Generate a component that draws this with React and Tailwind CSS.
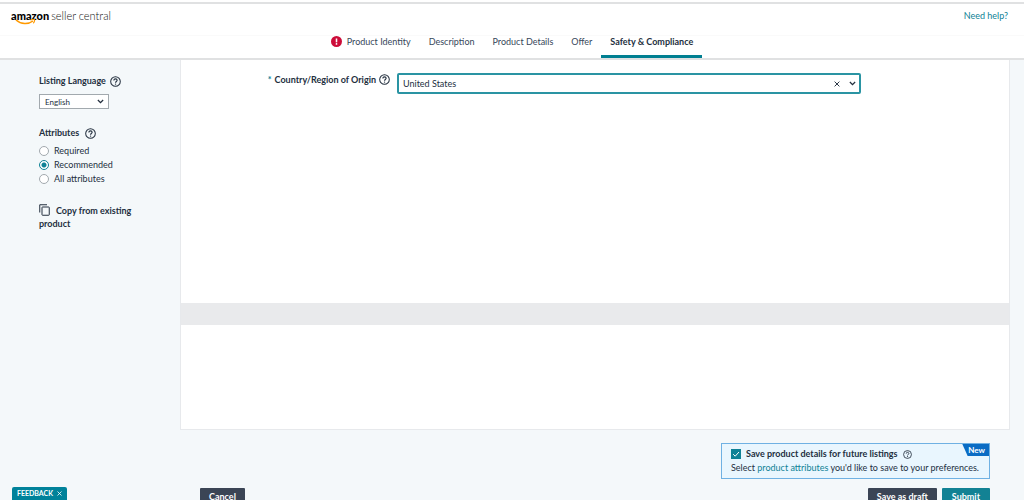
import { useState } from "react";

function HelpIcon({ className }) {
  return (
    <svg viewBox="0 0 24 24" fill="none" stroke="currentColor" className={className} aria-hidden="true">
      <circle cx="12" cy="12" r="10.5" strokeWidth="2.2" />
      <path d="M8.5 9.6C8.5 7.4 10 6.2 12 6.2s3.6 1.3 3.6 3.2c0 2.5-3.5 2.7-3.5 5.1" strokeWidth="2.4" />
      <circle cx="12.1" cy="17.6" r="1.5" fill="currentColor" stroke="none" />
    </svg>
  );
}

function Chevron({ className }) {
  return (
    <svg viewBox="0 0 12 8" fill="none" stroke="currentColor" strokeWidth="2.2" className={className} aria-hidden="true">
      <path d="M1.5 1.5 6 6l4.500-4.500" />
    </svg>
  );
}

function Cross({ className }) {
  return (
    <svg viewBox="0 0 10 10" fill="none" stroke="currentColor" strokeWidth="1.6" className={className} aria-hidden="true">
      <path d="m1 1 8 8M9 1 1 9" />
    </svg>
  );
}

function Logo() {
  return (
    <a href="#home" className="relative flex items-baseline gap-[2px] text-[11px] leading-4 text-[#111]">
      <span className="font-black text-black">amazon</span>
      <span className="font-light">seller central</span>
      <svg viewBox="0 0 40 12" fill="none" className="absolute top-[11px] left-1 h-[6px] w-[21px]" aria-hidden="true">
        <path d="M1 2c10 9 25 9 34 2" stroke="#f90" strokeWidth="3" />
        <path d="M30 2c3-1 6-1.500 8-.5.500 2-.500 5-2.500 7" stroke="#f90" strokeWidth="2.400" />
      </svg>
    </a>
  );
}

const tabs = ["Product Identity", "Description", "Product Details", "Offer", "Safety & Compliance"];

function Header() {
  return (
    <header className="border-t-2 border-b-2 border-[#e0e1e2] bg-white">
      <div className="flex h-8 items-center justify-between border-b border-[#fafafa] pr-4 pb-[7px] pl-[11px]">
        <Logo />
        <a href="#help" className="text-[9px] text-[#0f8296]">Need help?</a>
      </div>
      <nav className="flex h-[22px] justify-center text-[9px]">
        {tabs.map((tab, i) => (
          <a
            key={tab}
            href="#tab"
            className={
              i === tabs.length - 1
                ? "flex items-start border-b-3 border-[#007f91] px-[9px] font-bold text-[#232f3e] leading-3"
                : "flex items-start gap-[5px] px-[9px] text-[#37475a] leading-3"
            }
          >
            {i === 0 && (
              <svg viewBox="0 0 20 20" className="size-[11px]" aria-hidden="true">
                <circle cx="10" cy="10" r="10" fill="#cc0c39" />
                <path d="M10 4.500v7" stroke="#fff" strokeWidth="2.800" />
                <circle cx="10" cy="14.500" r="1.600" fill="#fff" />
              </svg>
            )}
            {tab}
          </a>
        ))}
      </nav>
    </header>
  );
}

function Sidebar() {
  const [attributes, setAttributes] = useState("Recommended");
  return (
    <aside className="w-[180px] shrink-0 pt-[15px] pr-12 pl-[39px] text-[9px]">
      <div className="flex items-center gap-1 leading-3 font-bold">
        <label htmlFor="language">Listing Language</label>
        <HelpIcon className="size-[11px]" />
      </div>
      <div className="relative mt-[7px] w-[70px]">
        <select
          id="language"
          defaultValue="English"
          className="h-[15px] w-full appearance-none border border-[#a2a9ae] bg-white pl-[5px] text-[8px] leading-3"
        >
          <option>English</option>
        </select>
        <Chevron className="pointer-events-none absolute top-[5px] right-[5px] h-[5px] w-[7px]" />
      </div>
      <fieldset className="mt-[18px]">
        <legend className="flex items-center gap-[6px] leading-3 font-bold">
          Attributes
          <HelpIcon className="size-[11px]" />
        </legend>
        <div className="mt-[5px] flex flex-col">
          {["Required", "Recommended", "All attributes"].map((name) => (
            <label key={name} className="flex h-[14px] items-center gap-[5px]">
              <input
                type="radio"
                name="attributes"
                checked={attributes === name}
                onChange={() => setAttributes(name)}
                className="size-[10px] appearance-none rounded-full border border-[#a2a9ae] bg-white checked:border-[#0f8296] checked:bg-[radial-gradient(circle,#0f8296_2px,white_3px)]"
              />
              {name}
            </label>
          ))}
        </div>
      </fieldset>
      <button type="button" className="mt-[18px] text-left leading-[13px] font-bold">
        <svg viewBox="0 0 22 24" fill="none" stroke="currentColor" strokeWidth="2" className="mr-[6px] inline h-3 w-[11px] align-[-2px]" aria-hidden="true">
          <path d="M1.500 17V1.500H16" />
          <rect x="6" y="6" width="14.500" height="16.500" rx="1" />
        </svg>
        Copy from existing product
      </button>
    </aside>
  );
}

function OriginField() {
  const [value, setValue] = useState("United States");
  return (
    <div className="flex pt-[13px] pr-[148px]">
      <div className="flex h-[13px] w-[216px] shrink-0 items-center justify-end gap-[3px] pr-[7px] text-[9px] font-bold">
        <span className="text-[#0f8296]">*</span>
        <label htmlFor="origin">Country/Region of Origin</label>
        <HelpIcon className="size-[11px]" />
      </div>
      <div className="flex h-[21px] flex-1 items-center rounded-xs border-2 border-[#2a94a3] bg-white pr-[3px]">
        <input
          id="origin"
          value={value}
          onChange={(e) => setValue(e.target.value)}
          className="min-w-0 flex-1 pl-1 text-[9px] outline-none"
        />
        <button type="button" aria-label="Clear" onClick={() => setValue("")}>
          <Cross className="size-[6px]" />
        </button>
        <button type="button" aria-label="Show options" className="ml-[9px]">
          <Chevron className="h-[5px] w-[7px]" />
        </button>
      </div>
    </div>
  );
}

function SavePanel() {
  return (
    <section className="relative border border-[#6fb1e3] bg-[#e9f6fe] py-[3px] pr-[10px] pl-[9px] text-[9px]">
      <div className="flex h-[14px] items-center gap-[5px] font-bold">
        <span className="relative flex size-[10px]">
          <input
            id="save"
            type="checkbox"
            defaultChecked
            className="peer size-[10px] appearance-none border border-[#0f8296] bg-white checked:bg-[#0f8296]"
          />
          <svg viewBox="0 0 10 10" fill="none" stroke="#fff" strokeWidth="1" className="pointer-events-none absolute inset-0 opacity-0 peer-checked:opacity-100" aria-hidden="true">
            <path d="m2.200 5.200 2 2 3.800-4.200" />
          </svg>
        </span>
        <label htmlFor="save">Save product details for future listings</label>
        <HelpIcon className="size-[9px]" />
      </div>
      <p className="leading-[14px]">
        Select <a href="#attributes" className="text-[#0f8296]">product attributes</a> you'd like to save to your preferences.
      </p>
      <span className="absolute top-0 right-0 bg-[#0a6cc4] pr-1 pl-[6px] text-[8px] leading-[12px] font-bold text-white [clip-path:polygon(0_0,100%_0,100%_100%,20%_100%)]">
        New
      </span>
    </section>
  );
}

export default function App() {
  return (
    <div className="flex h-screen flex-col overflow-hidden bg-white pt-[2px] font-['Lato','Noto_Sans',sans-serif] text-[#232f3e]">
      <Header />
      <div className="flex flex-1 bg-[#f4f8fa]">
        <Sidebar />
        <div className="min-w-0 flex-1">
          <main className="mr-[14px] flex h-[370px] flex-col border-x border-b border-[#e7e9ec] bg-white">
            <OriginField />
            <div className="mt-auto mb-[104px] h-[22px] bg-[#e9eaec]" />
          </main>
          <footer className="pt-[13px] pr-[34px] pl-5">
            <div className="flex justify-end">
              <SavePanel />
            </div>
            <div className="mt-[9px] flex gap-[5px] text-[9px] leading-[18px] font-bold text-white">
              <button type="button" className="mr-auto rounded-[1px] bg-[#3b4555] px-[9px]">Cancel</button>
              <button type="button" className="rounded-[1px] bg-[#3b4555] px-[9px]">Save as draft</button>
              <button type="button" className="rounded-[1px] bg-[#128294] px-[10px]">Submit</button>
            </div>
          </footer>
        </div>
      </div>
      <button
        type="button"
        className="fixed bottom-0 left-3 flex h-[13px] items-center gap-1 rounded-t-xs bg-[#00829a] px-[5px] text-[7px] font-bold text-white"
      >
        FEEDBACK
        <Cross className="size-[5px]" />
      </button>
    </div>
  );
}
